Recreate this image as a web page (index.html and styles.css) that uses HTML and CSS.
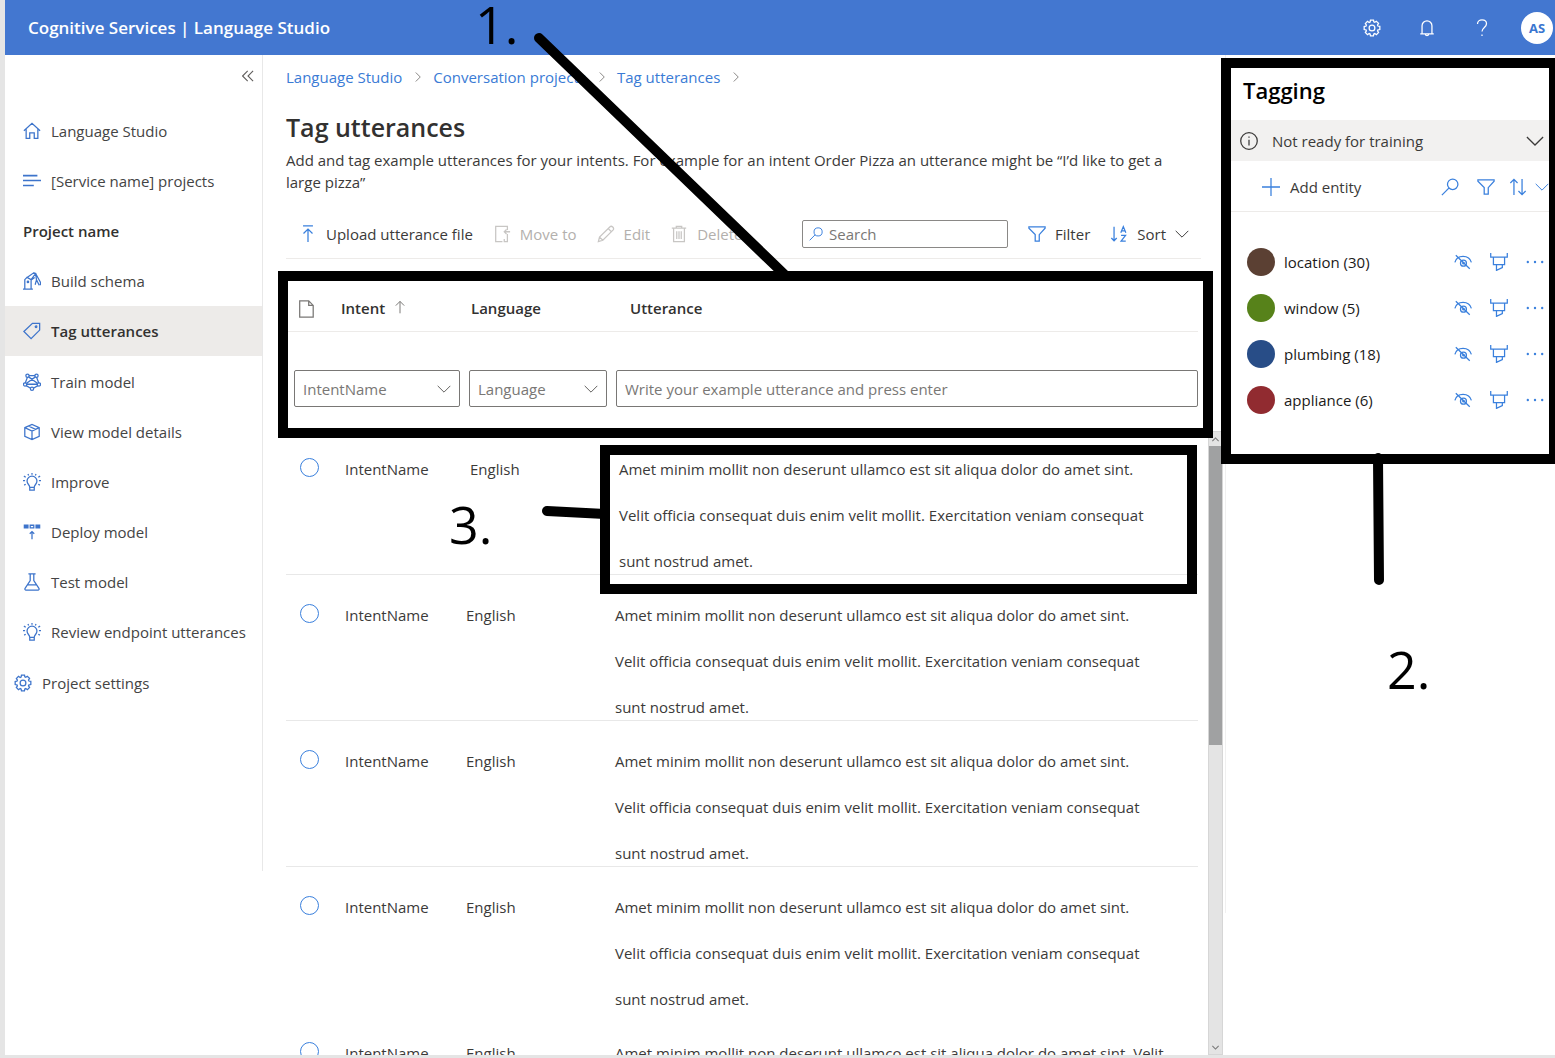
FILE: index.html
```html
<!DOCTYPE html>
<html lang="en">
<head>
<meta charset="utf-8">
<title>Tag utterances - Language Studio</title>
<link rel="stylesheet" href="styles.css">
</head>
<body>
<svg class="sprite" aria-hidden="true">
  <symbol id="gear" viewBox="0 0 20 20"><path d="M8.3 1.2h3.4l.3 2 1.1.5 1.7-1.2 2.5 2.4-1.2 1.8.5 1.1 2.1.4v3.5l-2.1.4-.5 1.2 1.2 1.7-2.4 2.4-1.8-1.2-1.1.5-.4 2H8.300l-.4-2-1.100-.5-1.800 1.200-2.400-2.400 1.200-1.800-.5-1.100-2-.4V8.300l2-.4.5-1.100-1.200-1.800 2.400-2.400 1.800 1.200 1.100-.5z"/><circle cx="10" cy="10" r="3.200"/></symbol>
  <symbol id="bell" viewBox="0 0 20 20"><path d="M2.500 16.500h15M4.500 16.500V7.500a5.500 5.500 0 0 1 11 0v9M8 16.500a2 2 0 0 0 4 0"/></symbol>
  <symbol id="help" viewBox="0 0 20 20"><path d="M5 5.500C5 2.500 7.300 1 10 1s5 1.600 5 4.300c0 4-5 4.200-5 8.700M10 17.200v1.600"/></symbol>
  <symbol id="home" viewBox="0 0 20 20"><path d="M1 9.800 10 1.500l9 8.300M3.500 8v10.300h4V12h5v6.300h4V8"/></symbol>
  <symbol id="lines" viewBox="0 0 20 20"><path d="M0 4h16M0 9.500h20M0 15h12" stroke-width="1.800"/></symbol>
  <symbol id="schema" viewBox="0 0 20 20"><path d="M0 19h11M2 19V8.500l2.500-2.500L9 8.500V19M4.500 6l7-4.800 2.500.5L9 8.500M11.500 1.200l2.500.5 5.500 10-.3 3M14 1.700l1 7-1.500 5.500M15 8.700l3 6M9.500 8.500 13 6"/><circle cx="5.500" cy="11" r=".8"/></symbol>
  <symbol id="tag" viewBox="0 0 20 20"><path d="M1 10.500 10.500 1.500H18.500V9L9 18.500z"/><circle cx="14.500" cy="5.300" r=".9"/></symbol>
  <symbol id="train" viewBox="0 0 20 20"><path d="M5 4.500 2.500 11M6.500 3h7M15 4.500l2.500 6.500M6.200 4.300 16 11.300M13.800 4.300 4 11.300M4 12.500h12M3.500 14l5 3M16.500 14l-5 3"/><circle cx="5" cy="3" r="1.800"/><circle cx="15" cy="3" r="1.800"/><circle cx="2.300" cy="12.700" r="1.800"/><circle cx="17.700" cy="12.700" r="1.800"/><circle cx="10" cy="17.500" r="1.800"/></symbol>
  <symbol id="box" viewBox="0 0 20 20"><path d="M2 5.200 10 1.500l8 3.700v9.600L10 18.500l-8-3.700zM2 5.200l8 3.800 8-3.800M10 9v9.500M6 3.300l8 3.800"/></symbol>
  <symbol id="bulb" viewBox="0 0 20 20"><path d="M7.500 16c0-3-3-3.500-3-7a5.500 5.500 0 0 1 11 0c0 3.500-3 4-3 7zM7.500 16v3h5v-3M10 0v2M5.500 1l.8 1.800M14.500 1l-.8 1.800M1 3.500l2 1.300M19 3.500l-2 1.300M0 8.500h2.300M20 8.500h-2.300M1.300 13.500l1.700-1M18.700 13.500l-1.700-1"/></symbol>
  <symbol id="deploy" viewBox="0 0 20 20"><path d="M1.500 2.500h4v3h-4zM14.500 2.500h4v3h-4z" fill="currentColor"/><path d="M8 2.500h4v3H8zM10 18v-8M7.500 12 10 9.500l2.500 2.500"/></symbol>
  <symbol id="flask" viewBox="0 0 20 20"><path d="M6 1h8M8 1v7.500L2.300 17c-.6 1 0 2 1 2h13.400c1 0 1.600-1 1-2L12 8.500V1M5 13.300h10"/></symbol>
  <symbol id="upload" viewBox="0 0 20 20"><path d="M4.500 1h11M10 19V4.500M5 9.500l5-5 5 5"/></symbol>
  <symbol id="move" viewBox="0 0 20 20"><path d="M10.500 18.500H3v-17h13v4M19 7.500h-6.500M15 5l-2.500 2.500L15 10M16 10v8.500h-3.500v-3"/></symbol>
  <symbol id="pencil" viewBox="0 0 20 20"><path d="m1.500 18.500 1.300-5L14.500 1.900c1.800-1.600 5 1.500 3.500 3.500L6.500 17zM2.800 13.500l3.700 3.500M12.500 4l3.500 3.500"/></symbol>
  <symbol id="trash" viewBox="0 0 20 20"><path d="M2 3.500h16M7 3.500v-2h6v2M4 3.500v15h12v-15M7.500 7v8.500M10 7v8.500M12.500 7v8.500"/></symbol>
  <symbol id="search" viewBox="0 0 20 20"><circle cx="13" cy="7" r="5.800"/><path d="M8.700 11.200 1 19"/></symbol>
  <symbol id="filter" viewBox="0 0 20 20"><path d="M1 2h18v1.500l-6.500 7.200V18h-4.500v-7.300L1 3.500z"/></symbol>
  <symbol id="sort" viewBox="0 0 20 20"><path d="M4.500 2v15.500M1.500 14.500l3 3 3-3M12 8.500l2.800-6.700 2.800 6.700M13 6.500h3.600M12.300 11.500h5l-5 6.500h5.200"/></symbol>
  <symbol id="updown" viewBox="0 0 20 20"><path d="M5.500 19V1.500M1.500 5.500l4-4 4 4M14.500 1v17.500M10.500 14.500l4 4 4-4"/></symbol>
  <symbol id="down" viewBox="0 0 20 20"><path d="m1 5.500 9 9 9-9"/></symbol>
  <symbol id="up" viewBox="0 0 20 20"><path d="m1 14.500 9-9 9 9"/></symbol>
  <symbol id="right" viewBox="0 0 20 20"><path d="m5.500 1 9 9-9 9" stroke-width="2"/></symbol>
  <symbol id="collapse" viewBox="0 0 20 20"><path d="M9.500 1.500 1 10l8.500 8.500M18.500 1.500 10 10l8.500 8.500" stroke-width="1.800"/></symbol>
  <symbol id="arrow-up" viewBox="0 0 20 20"><path d="M10 19V2M4 8l6-6 6 6"/></symbol>
  <symbol id="doc" viewBox="0 0 20 20"><path d="M3 1h10l5 5v13H3zM13 1v5h5"/></symbol>
  <symbol id="info" viewBox="0 0 20 20"><circle cx="10" cy="10" r="9.200"/><path d="M10 8.500V15M10 5v1.500"/></symbol>
  <symbol id="plus" viewBox="0 0 20 20"><path d="M10 0v20M0 10h20"/></symbol>
  <symbol id="hide" viewBox="0 0 20 20"><path d="M1 10.500C3 1.500 17 1.500 19.300 10.500M2 2.500l15.500 15"/><circle cx="10.500" cy="11.300" r="3.300"/><circle cx="10.500" cy="11.300" r=".8"/></symbol>
  <symbol id="marker" viewBox="0 0 20 20"><path d="M.8 0v4.500h18.400V0M3.800 4.500V13h12.400V4.500M7.200 13v6.300l6.500-3V13"/></symbol>
  <symbol id="dots" viewBox="0 0 20 20"><g fill="currentColor" stroke="none"><circle cx="2" cy="10" r="1.300"/><circle cx="10" cy="10" r="1.300"/><circle cx="18" cy="10" r="1.300"/></g></symbol>
</svg>

<div class="app">
  <header class="topbar">
    <div class="brand">Cognitive Services | Language Studio</div>
    <div class="topbar-actions">
      <button class="icon-button" aria-label="Settings"><svg class="icon"><use href="#gear"/></svg></button>
      <button class="icon-button" aria-label="Notifications"><svg class="icon"><use href="#bell"/></svg></button>
      <button class="icon-button" aria-label="Help"><svg class="icon"><use href="#help"/></svg></button>
    </div>
    <button class="avatar">AS</button>
  </header>

  <div class="workspace">
    <nav class="sidebar" aria-label="Project">
      <button class="icon-button collapse" aria-label="Collapse"><svg class="icon icon-small"><use href="#collapse"/></svg></button>
      <a class="nav-item" href="#"><svg class="icon"><use href="#home"/></svg>Language Studio</a>
      <a class="nav-item" href="#"><svg class="icon"><use href="#lines"/></svg>[Service name] projects</a>
      <h2 class="nav-heading">Project name</h2>
      <a class="nav-item" href="#"><svg class="icon"><use href="#schema"/></svg>Build schema</a>
      <a class="nav-item is-active" href="#" aria-current="page"><svg class="icon"><use href="#tag"/></svg>Tag utterances</a>
      <a class="nav-item" href="#"><svg class="icon"><use href="#train"/></svg>Train model</a>
      <a class="nav-item" href="#"><svg class="icon"><use href="#box"/></svg>View model details</a>
      <a class="nav-item" href="#"><svg class="icon"><use href="#bulb"/></svg>Improve</a>
      <a class="nav-item" href="#"><svg class="icon"><use href="#deploy"/></svg>Deploy model</a>
      <a class="nav-item" href="#"><svg class="icon"><use href="#flask"/></svg>Test model</a>
      <a class="nav-item" href="#"><svg class="icon"><use href="#bulb"/></svg>Review endpoint utterances</a>
      <a class="nav-item nav-settings" href="#"><svg class="icon"><use href="#gear"/></svg>Project settings</a>
    </nav>

    <main class="main">
      <div class="main-head">
        <nav class="breadcrumb" aria-label="Breadcrumb">
          <a href="#">Language Studio</a><svg class="icon icon-tiny"><use href="#right"/></svg>
          <a href="#">Conversation projects</a><svg class="icon icon-tiny"><use href="#right"/></svg>
          <a href="#">Tag utterances</a><svg class="icon icon-tiny"><use href="#right"/></svg>
        </nav>
        <h1 class="title">Tag utterances</h1>
        <p class="intro">Add and tag example utterances for your intents. For example for an intent Order Pizza an utterance might be “I’d like to get a large pizza”</p>
        <div class="toolbar">
          <button class="tool"><svg class="icon icon-blue"><use href="#upload"/></svg>Upload utterance file</button>
          <button class="tool" disabled><svg class="icon"><use href="#move"/></svg>Move to</button>
          <button class="tool" disabled><svg class="icon"><use href="#pencil"/></svg>Edit</button>
          <button class="tool" disabled><svg class="icon"><use href="#trash"/></svg>Delete</button>
          <label class="search"><svg class="icon icon-small icon-blue"><use href="#search"/></svg><input type="search" placeholder="Search" aria-label="Search"></label>
          <button class="tool"><svg class="icon icon-blue"><use href="#filter"/></svg>Filter</button>
          <button class="tool"><svg class="icon icon-blue"><use href="#sort"/></svg>Sort<svg class="icon icon-small"><use href="#down"/></svg></button>
        </div>
      </div>

      <div class="list">
        <table class="utterances">
          <colgroup><col class="col-pick"><col class="col-intent"><col class="col-language"><col></colgroup>
          <thead>
            <tr class="heads">
              <th><svg class="icon"><use href="#doc"/></svg></th>
              <th>Intent <svg class="icon icon-small sort-mark"><use href="#arrow-up"/></svg></th>
              <th class="head-language">Language</th>
              <th class="head-utterance">Utterance</th>
            </tr>
            <tr>
              <td colspan="4">
                <div class="entry">
                  <div class="select"><select aria-label="Intent"><option>IntentName</option></select><svg class="icon icon-small"><use href="#down"/></svg></div>
                  <div class="select"><select aria-label="Language"><option>Language</option></select><svg class="icon icon-small"><use href="#down"/></svg></div>
                  <input class="field" type="text" aria-label="Utterance" placeholder="Write your example utterance and press enter">
                </div>
              </td>
            </tr>
          </thead>
          <tbody>
            <tr class="is-current">
              <td class="pick"><input type="radio" name="row" aria-label="Select row 1"></td><td class="intent">IntentName</td><td class="language">English</td>
              <td><p class="utterance">Amet minim mollit non deserunt ullamco est sit aliqua dolor do amet sint.<br>Velit officia consequat duis enim velit mollit. Exercitation veniam consequat<br>sunt nostrud amet.</p></td>
            </tr>
            <tr>
              <td class="pick"><input type="radio" name="row" aria-label="Select row 2"></td><td class="intent">IntentName</td><td class="language">English</td>
              <td><p class="utterance">Amet minim mollit non deserunt ullamco est sit aliqua dolor do amet sint.<br>Velit officia consequat duis enim velit mollit. Exercitation veniam consequat<br>sunt nostrud amet.</p></td>
            </tr>
            <tr>
              <td class="pick"><input type="radio" name="row" aria-label="Select row 3"></td><td class="intent">IntentName</td><td class="language">English</td>
              <td><p class="utterance">Amet minim mollit non deserunt ullamco est sit aliqua dolor do amet sint.<br>Velit officia consequat duis enim velit mollit. Exercitation veniam consequat<br>sunt nostrud amet.</p></td>
            </tr>
            <tr class="is-last">
              <td class="pick"><input type="radio" name="row" aria-label="Select row 4"></td><td class="intent">IntentName</td><td class="language">English</td>
              <td><p class="utterance">Amet minim mollit non deserunt ullamco est sit aliqua dolor do amet sint.<br>Velit officia consequat duis enim velit mollit. Exercitation veniam consequat<br>sunt nostrud amet.</p></td>
            </tr>
            <tr>
              <td class="pick"><input type="radio" name="row" aria-label="Select row 5"></td><td class="intent">IntentName</td><td class="language">English</td>
              <td><p class="utterance">Amet minim mollit non deserunt ullamco est sit aliqua dolor do amet sint. Velit</p></td>
            </tr>
          </tbody>
        </table>
        <div class="scrollbar">
          <svg class="icon scroll-arrow"><use href="#up"/></svg>
          <div class="scroll-thumb"></div>
          <svg class="icon scroll-arrow"><use href="#down"/></svg>
        </div>
      </div>
    </main>

    <aside class="panel">
      <h2 class="panel-title">Tagging</h2>
      <button class="status"><svg class="icon"><use href="#info"/></svg><span class="status-text">Not ready for training</span><svg class="icon"><use href="#down"/></svg></button>
      <div class="panel-tools">
        <button class="add"><svg class="icon icon-blue"><use href="#plus"/></svg>Add entity</button>
        <button class="icon-button" aria-label="Search entities"><svg class="icon"><use href="#search"/></svg></button>
        <button class="icon-button" aria-label="Filter entities"><svg class="icon"><use href="#filter"/></svg></button>
        <button class="icon-button sort-entities" aria-label="Sort entities"><svg class="icon"><use href="#updown"/></svg><svg class="icon icon-small"><use href="#down"/></svg></button>
      </div>
      <ul class="entities">
        <li class="entity"><span class="dot dot-brown"></span><span class="entity-name">location (30)</span><button class="icon-button" aria-label="Hide"><svg class="icon"><use href="#hide"/></svg></button><button class="icon-button" aria-label="Highlight"><svg class="icon"><use href="#marker"/></svg></button><button class="icon-button" aria-label="More"><svg class="icon"><use href="#dots"/></svg></button></li>
        <li class="entity"><span class="dot dot-green"></span><span class="entity-name">window (5)</span><button class="icon-button" aria-label="Hide"><svg class="icon"><use href="#hide"/></svg></button><button class="icon-button" aria-label="Highlight"><svg class="icon"><use href="#marker"/></svg></button><button class="icon-button" aria-label="More"><svg class="icon"><use href="#dots"/></svg></button></li>
        <li class="entity"><span class="dot dot-blue"></span><span class="entity-name">plumbing (18)</span><button class="icon-button" aria-label="Hide"><svg class="icon"><use href="#hide"/></svg></button><button class="icon-button" aria-label="Highlight"><svg class="icon"><use href="#marker"/></svg></button><button class="icon-button" aria-label="More"><svg class="icon"><use href="#dots"/></svg></button></li>
        <li class="entity"><span class="dot dot-red"></span><span class="entity-name">appliance (6)</span><button class="icon-button" aria-label="Hide"><svg class="icon"><use href="#hide"/></svg></button><button class="icon-button" aria-label="Highlight"><svg class="icon"><use href="#marker"/></svg></button><button class="icon-button" aria-label="More"><svg class="icon"><use href="#dots"/></svg></button></li>
      </ul>
    </aside>
  </div>

  <div class="callouts">
    <svg class="callout-lines"><path d="M539 38 785 275M1378 458l1 122M547 511l58 3"/></svg>
    <div class="callout callout-entry"></div>
    <div class="callout callout-panel"></div>
    <div class="callout callout-utterance"></div>
    <span class="number number-one">1.</span>
    <span class="number number-two">2.</span>
    <span class="number number-three">3.</span>
  </div>
</div>
</body>
</html>
```
FILE: styles.css
```css
* { box-sizing: border-box; }

body {
  margin: 0;
  color: #3b3a39;
  background: #fff;
  font: 15px/22px "Open Sans", "Noto Sans", sans-serif;
}

button, input, select { font: inherit; color: inherit; }
button { padding: 0; border: 0; background: none; }
h1, h2, p, ul { margin: 0; padding: 0; }
a { color: #3a7bd5; text-decoration: none; }

.sprite { display: none; }

.icon {
  flex: none;
  width: 18px;
  height: 18px;
  fill: none;
  stroke: currentColor;
  stroke-width: 1.4;
}
.icon-small { width: 14px; height: 14px; }
.icon-tiny { width: 10px; height: 10px; color: #8a8886; }
.icon-blue { color: #3a80dd; }
.icon-button { display: flex; align-items: center; }

.app {
  position: relative;
  display: flex;
  flex-direction: column;
  height: 100vh;
  overflow: hidden;
  border-left: 5px solid #e5e5e5;
  border-bottom: 3px solid #e5e5e5;
}

/* Top bar */
.topbar {
  flex: none;
  display: flex;
  align-items: center;
  height: 55px;
  padding: 0 2px 0 23px;
  color: #fff;
  background: #4377d0;
}
.brand { flex: 1; font-size: 17px; font-weight: 600; }
.topbar-actions { display: flex; gap: 37px; margin-right: 30px; }
.avatar {
  width: 32px;
  height: 32px;
  border-radius: 50%;
  color: #3a76d0;
  background: #fff;
  font-size: 13px;
  font-weight: 700;
}

.workspace { flex: 1; display: flex; align-items: flex-start; min-height: 0; }

/* Sidebar */
.sidebar {
  flex: none;
  width: 258px;
  padding: 15px 0 163px;
  border-right: 1px solid #e8e8e8;
}
.collapse { width: 12px; height: 12px; margin: 0 8px 24px auto; color: #605e5c; }
.collapse .icon { width: 12px; height: 12px; }
.nav-item, .nav-heading { display: flex; align-items: center; height: 50px; padding-left: 18px; }
.nav-item { gap: 10px; color: #444; }
.nav-item .icon { color: #3d74cb; }
.nav-heading { color: #323130; font-size: 15px; font-weight: 600; }
.nav-item.is-active { margin-bottom: 1px; color: #323130; background: #edebe9; font-weight: 600; }
.nav-settings { margin-top: 1px; padding-left: 9px; }

/* Main column */
.main { flex: 1; align-self: stretch; display: flex; flex-direction: column; min-width: 0; min-height: 0; }
.main-head { flex: none; padding: 11px 24px 0 23px; }
.breadcrumb { display: flex; align-items: center; gap: 11px; }
.breadcrumb a:not(:first-child) { margin-left: -1px; }
.title { margin-top: 21px; color: #323130; font-size: 25px; line-height: 36px; font-weight: 600; }
.intro { margin-top: 4px; min-height: 44px; }
.toolbar {
  display: flex;
  align-items: center;
  gap: 20px;
  height: 50px;
  margin-top: 16px;
  padding: 0 12px 0 13px;
  border-bottom: 1px solid #edebe9;
}
.tool { display: flex; align-items: center; gap: 9px; white-space: nowrap; }
.tool:disabled { color: #b3b0ad; }
.tool:disabled .icon { color: #c8c6c4; }
.search {
  display: flex;
  align-items: center;
  gap: 6px;
  width: 206px;
  height: 28px;
  margin-left: auto;
  padding: 0 6px;
  border: 1px solid #8a8886;
  border-radius: 2px;
}
.search input { flex: 1; min-width: 0; padding: 0; border: 0; outline: 0; background: none; }
::placeholder { color: #797775; opacity: 1; }

/* Utterance list */
.list { position: relative; flex: 1; min-height: 0; overflow: hidden; padding: 27px 27px 0 23px; }
.utterances { width: 100%; border-collapse: separate; border-spacing: 0; table-layout: fixed; }
.col-pick { width: 55px; }
.col-intent { width: 125px; }
.col-language { width: 149px; }
.utterances th, .utterances td { padding: 0; text-align: left; vertical-align: top; }
.utterances .heads th {
  height: 46px;
  padding-bottom: 2px;
  vertical-align: middle;
  border-bottom: 1px solid #edebe9;
  color: #323130;
  font-weight: 600;
  white-space: nowrap;
}
.heads .icon { color: #797775; vertical-align: middle; }
.heads .sort-mark { margin: 0 0 4px 4px; }
.heads th:first-child { padding-left: 11px; }
.heads .head-language { padding-left: 5px; }
.heads .head-utterance { padding-left: 15px; }

.entry { display: grid; grid-template-columns: 166px 138px 1fr; gap: 9px; height: 97px; padding: 38px 0 22px 8px; }
.select { position: relative; }
.select select { appearance: none; width: 100%; }
.select .icon { position: absolute; right: 9px; top: 12px; color: #605e5c; pointer-events: none; }
.select select, .field {
  height: 37px;
  padding: 0 8px;
  border: 1px solid #797775;
  border-radius: 2px;
  color: #797775;
  background: #fff;
}
.field { min-width: 0; }

.utterances tbody td { height: 146px; padding-top: 17px; line-height: 46px; border-bottom: 1px solid #e8e8e8; }
.utterances tbody .is-last td { border-bottom-color: transparent; }
.utterances .pick { padding-left: 14px; }
.utterances .intent { padding-left: 4px; }
.utterance { margin-bottom: -10px; white-space: nowrap; }
.is-current .language, .is-current .utterance { padding-left: 4px; }
.pick input {
  appearance: none;
  display: block;
  width: 19px;
  height: 19px;
  margin: 12px 0 0;
  border: 1px solid #3a80dd;
  border-radius: 50%;
}

.scrollbar {
  position: absolute;
  top: 172px;
  right: 2px;
  bottom: 0;
  display: flex;
  flex-direction: column;
  align-items: center;
  width: 15px;
  border: 1px solid #d6d6d6;
  background: #e4e4e4;
}
.scroll-arrow { width: 7px; height: 7px; margin: 4px 0 3px; color: #777; stroke-width: 3; }
.scroll-thumb { width: 13px; height: 48%; margin-bottom: auto; background: #a0a1a2; }

/* Tagging panel */
.panel { flex: none; width: 330px; padding-bottom: 490px; border-left: 1px solid #f0f0f0; }
.panel-title { padding: 20px 17px 15px; color: #000; font-size: 22px; line-height: 30px; font-weight: 600; }
.status { display: flex; align-items: center; gap: 14px; width: 100%; height: 41px; padding: 1px 11px 0 14px; background: #f2f1f0; }
.status-text { flex: 1; text-align: left; }
.panel-tools { display: flex; align-items: center; gap: 18px; height: 51px; padding: 2px 6px 0 36px; color: #3a80dd; border-bottom: 1px solid #edebe9; }
.add { display: flex; flex: 1; align-items: center; gap: 10px; color: #3b3a39; }
.sort-entities { gap: 8px; margin-left: -4px; }
.entities { padding-top: 27px; list-style: none; }
.entity { display: flex; align-items: center; gap: 18px; height: 46px; padding: 0 11px 0 21px; color: #3a80dd; }
.entity-name { flex: 1; margin-left: -9px; color: #1b1a19; }
.dot { width: 28px; height: 28px; border-radius: 50%; }
.dot-brown { background: #5b4033; }
.dot-green { background: #57821a; }
.dot-blue { background: #284d87; }
.dot-red { background: #912b30; }

/* Numbered callouts laid over the page */
.callouts { position: absolute; inset: 0; overflow: hidden; margin-left: -5px; pointer-events: none; color: #000; }
.callout-lines { position: absolute; inset: 0; width: 100%; height: 100%; fill: none; stroke: #000; stroke-width: 10; stroke-linecap: round; }
.callout { position: absolute; border: 10px solid #000; }
.callout-entry { top: 271px; left: 278px; right: 342px; height: 167px; }
.callout-panel { top: 58px; right: -4px; width: 338px; height: 406px; }
.callout-utterance { top: 445px; left: 600px; right: 358px; height: 149px; }
.number { position: absolute; font-size: 52px; line-height: 54px; }
.number-one { top: -3px; left: 475px; }
.number-two { top: 642px; left: 1387px; }
.number-three { top: 497px; left: 449px; }
```
